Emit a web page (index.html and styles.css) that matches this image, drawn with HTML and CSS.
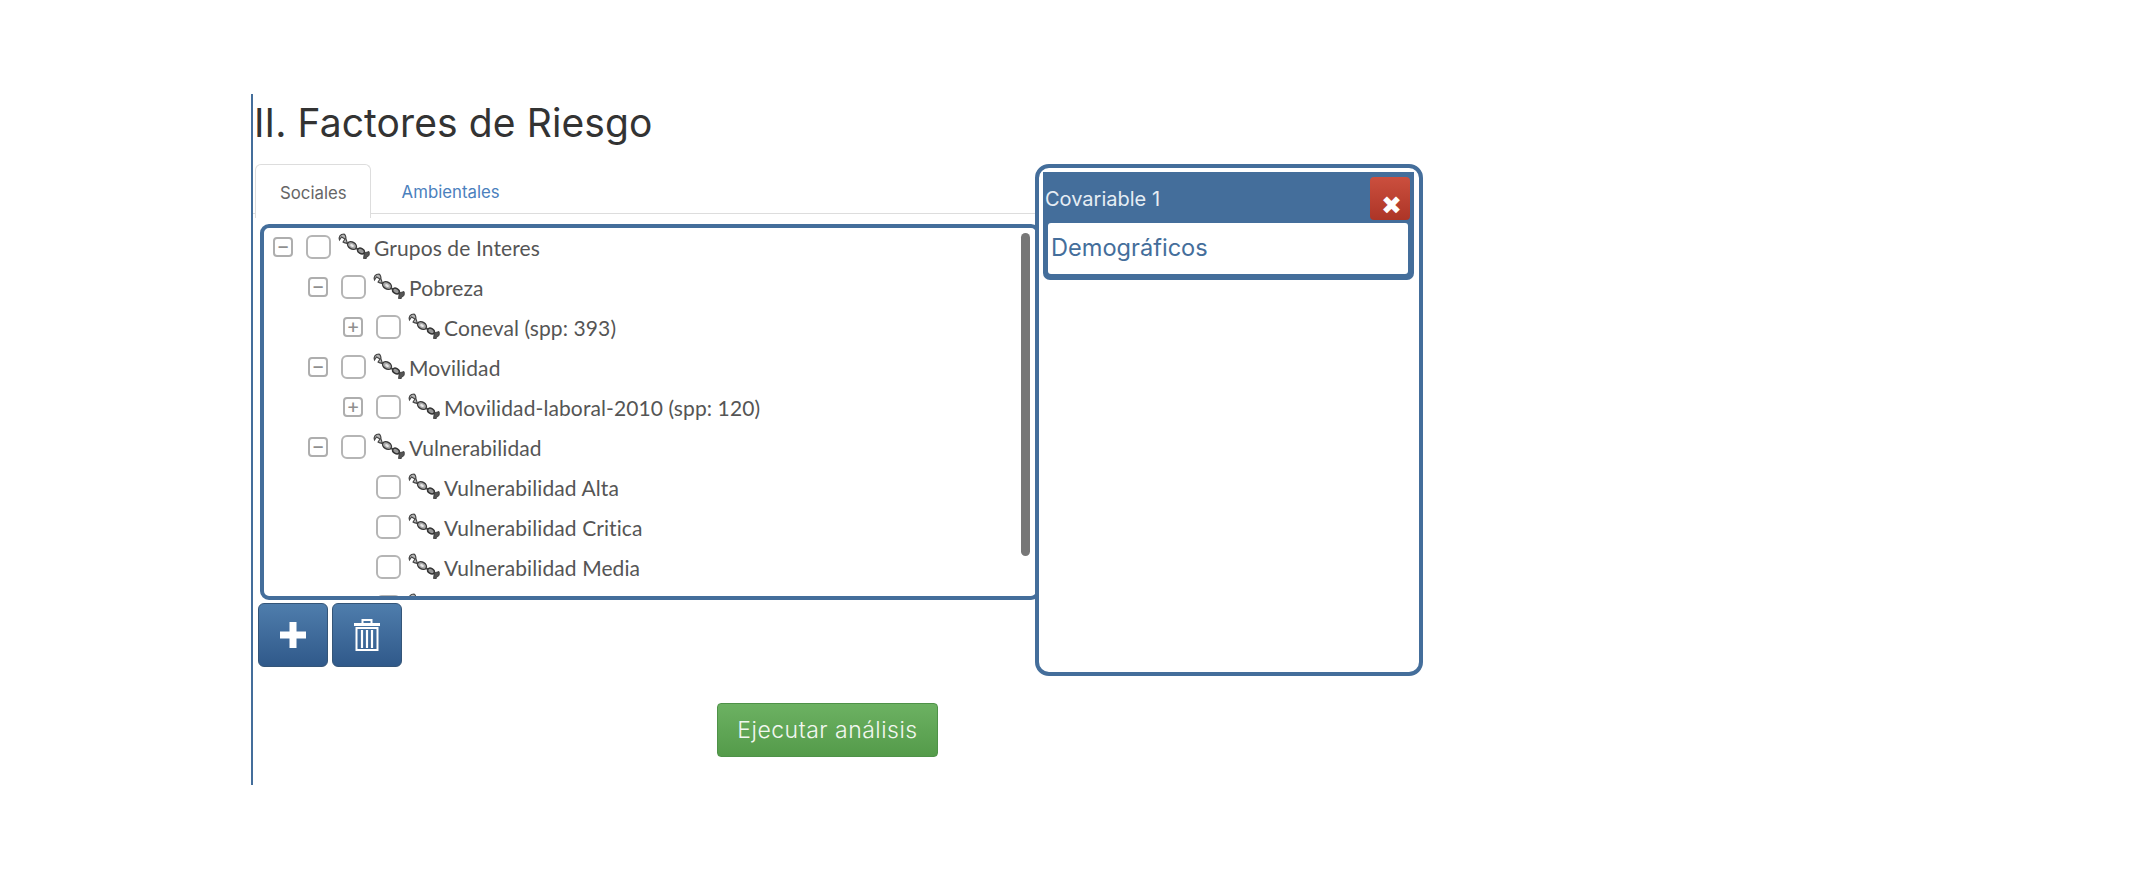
FILE: index.html
```html
<!DOCTYPE html>
<html lang="es">
<head>
  <meta charset="UTF-8" />
  <title>Factores de Riesgo</title>
  <link rel="stylesheet" href="styles.css">
</head>
<body>

<svg class="defs" width="0" height="0">
  <symbol id="dna" viewBox="0 0 33 26">
    <path d="M7 1 C3 1 1.500 4 2.500 7 L4.500 4 L8 6 L6 9 C7.500 10 9 10 10.500 10.500 L9 6 C9 4 9 2 7 1z" fill="#b5b5b5" stroke="#444" stroke-width="1.100"/>
    <ellipse cx="15" cy="12.500" rx="4.800" ry="3.400" transform="rotate(32 15 12.500)" fill="#a8a8a8" stroke="#3a3a3a" stroke-width="1.400"/>
    <ellipse cx="15" cy="12.500" rx="2" ry="1.300" transform="rotate(32 15 12.500)" fill="#e8e8e8"/>
    <path d="M19 15 L21 16.500" stroke="#444" stroke-width="2"/>
    <ellipse cx="24" cy="18" rx="3.600" ry="2.600" transform="rotate(32 24 18)" fill="#999" stroke="#333" stroke-width="1.400"/>
    <path d="M27 20 L32 18.500 C33 21 32 24 29.500 24 L29 26 L26.500 25.500 L27 22z" fill="#555" stroke="#333" stroke-width="0.800"/>
  </symbol>
</svg>

<div class="page">
  <h1>II. Factores de Riesgo</h1>

  <div class="workspace">
    <div class="left-col">
      <ul class="tabs">
        <li class="tab active">Sociales</li>
        <li class="tab">Ambientales</li>
      </ul>

      <div class="tree">
        <div class="row">
          <span class="toggle">&minus;</span><span class="check"></span>
          <svg class="dna"><use href="#dna"/></svg><span class="label">Grupos de Interes</span>
        </div>
        <div class="row lvl-1">
          <span class="toggle">&minus;</span><span class="check"></span>
          <svg class="dna"><use href="#dna"/></svg><span class="label">Pobreza</span>
        </div>
        <div class="row lvl-2">
          <span class="toggle">+</span><span class="check"></span>
          <svg class="dna"><use href="#dna"/></svg><span class="label">Coneval (spp: 393)</span>
        </div>
        <div class="row lvl-1">
          <span class="toggle">&minus;</span><span class="check"></span>
          <svg class="dna"><use href="#dna"/></svg><span class="label">Movilidad</span>
        </div>
        <div class="row lvl-2">
          <span class="toggle">+</span><span class="check"></span>
          <svg class="dna"><use href="#dna"/></svg><span class="label">Movilidad-laboral-2010 (spp: 120)</span>
        </div>
        <div class="row lvl-1">
          <span class="toggle">&minus;</span><span class="check"></span>
          <svg class="dna"><use href="#dna"/></svg><span class="label">Vulnerabilidad</span>
        </div>
        <div class="row lvl-2">
          <span class="toggle blank"></span><span class="check"></span>
          <svg class="dna"><use href="#dna"/></svg><span class="label">Vulnerabilidad Alta</span>
        </div>
        <div class="row lvl-2">
          <span class="toggle blank"></span><span class="check"></span>
          <svg class="dna"><use href="#dna"/></svg><span class="label">Vulnerabilidad Critica</span>
        </div>
        <div class="row lvl-2">
          <span class="toggle blank"></span><span class="check"></span>
          <svg class="dna"><use href="#dna"/></svg><span class="label">Vulnerabilidad Media</span>
        </div>
        <!-- next row is only peeking out above the bottom border -->
        <div class="row lvl-2">
          <span class="toggle blank"></span><span class="check"></span>
          <svg class="dna"><use href="#dna"/></svg>
        </div>
        <div class="scroll-thumb"></div>
      </div>

      <div class="tree-actions">
        <button class="icon-btn" type="button">
          <svg width="28" height="28" viewBox="0 0 28 28"><path d="M10.500 1h7v9.500h9.500v7h-9.500v9.500h-7v-9.500h-9.500v-7h9.500z" fill="#fff"/></svg>
        </button>
        <button class="icon-btn" type="button">
          <svg width="28" height="34" viewBox="0 0 28 34" fill="none" stroke="#fff">
            <path d="M1 6.500h26" stroke-width="3"/>
            <path d="M9.500 5v-3h9v3" stroke-width="2"/>
            <path d="M3.500 10h21v22h-21z" stroke-width="2"/>
            <path d="M9 12v18M14 12v18M19 12v18" stroke-width="2.200"/>
          </svg>
        </button>
      </div>
    </div>

    <aside class="panel">
      <div class="cov">
        <div class="cov-head">
          <span class="cov-title">Covariable 1</span>
          <button class="close-btn" type="button">&#10006;</button>
        </div>
        <div class="cov-body">Demográficos</div>
      </div>
    </aside>
  </div>

  <div class="run-row">
    <button class="run-btn" type="button">Ejecutar análisis</button>
  </div>
</div>

</body>
</html>
```

FILE: styles.css
```css
body {
  margin: 0;
  background: #fff;
  font-family: "Inter", sans-serif;
  color: #333;
}

.defs {
  display: block;
  height: 0;
}

.page {
  margin: 94px 0 0 251px;
  width: 1200px;
  height: 691px;
  border-left: 2px solid #446e9b;
}

h1 {
  margin: 0;
  height: 70px;
  padding-left: 1px;
  font-size: 39px;
  line-height: 58px;
  letter-spacing: 0.1px;
  font-weight: 400;
  color: #333;
  box-sizing: border-box;
}

.workspace {
  display: flex;
  align-items: flex-start;
}

.left-col {
  width: 787px;
  flex: none;
}

.tabs {
  display: flex;
  height: 50px;
  margin: 0 0 10px;
  padding: 0 0 0 2px;
  list-style: none;
  border-bottom: 1px solid #ddd;
  box-sizing: border-box;
}

.tab {
  height: 49px;
  padding: 0 29px 0 30px;
  font-size: 16.800px;
  line-height: 56px;
  color: #4a80bd;
}

.tab.active {
  height: 54px;
  padding: 0 23px 0 24px;
  margin-right: 1px;
  color: #666;
  background: #fff;
  border: 1px solid #ddd;
  border-bottom: none;
  border-radius: 6px 6px 0 0;
  box-sizing: border-box;
  position: relative;
}

.tree {
  height: 376px;
  margin-left: 7px;
  padding-left: 9px;
  border: 4px solid #446e9b;
  border-radius: 9px;
  box-sizing: border-box;
  overflow: hidden;
  background: #fff;
  position: relative;
}

.scroll-thumb {
  position: absolute;
  top: 5px;
  right: 6px;
  width: 9px;
  height: 323px;
  background: #777;
  border-radius: 5px;
}

.row {
  display: flex;
  align-items: center;
  height: 40px;
  position: relative;
  top: -1px;
}

.lvl-1 {
  padding-left: 35px;
}

.lvl-2 {
  padding-left: 70px;
}

.toggle {
  width: 20px;
  height: 20px;
  flex: none;
  margin-right: 13px;
  border: 2px solid #aeaeae;
  border-radius: 4px;
  box-sizing: border-box;
  font-size: 20px;
  line-height: 14px;
  text-align: center;
  color: #8f8f8f;
}

.toggle.blank {
  border: none;
}

.check {
  width: 25px;
  height: 24px;
  flex: none;
  margin-right: 6px;
  border: 2px solid #b5b5b5;
  border-radius: 6px;
  box-sizing: border-box;
  background: #fff;
}

.dna {
  width: 33px;
  height: 26px;
  flex: none;
  margin: -3px 4px 0 0;
}

.label {
  font-family: "Lato", sans-serif;
  font-size: 21px;
  letter-spacing: 0.1px;
  color: #555;
  white-space: nowrap;
}

.tree-actions {
  display: flex;
  gap: 4px;
  margin: 3px 0 0 5px;
}

.icon-btn {
  display: flex;
  align-items: center;
  justify-content: center;
  width: 70px;
  height: 64px;
  padding: 0;
  border: 1px solid #345578;
  border-radius: 6px;
  background: linear-gradient(#4f7dac, #30598a);
}

.panel {
  width: 388px;
  height: 512px;
  flex: none;
  margin-left: -5px;
  padding: 4px 5px 0 4px;
  border: 4px solid #446e9b;
  border-radius: 14px;
  box-sizing: border-box;
  background: #fff;
  position: relative;
}

.cov {
  padding: 5px 6px 6px 5px;
  background: #446e9b;
  border-radius: 0 0 7px 7px;
}

.cov-head {
  display: flex;
  align-items: flex-start;
  justify-content: space-between;
  height: 46px;
  margin-right: -2px;
}

.cov-title {
  margin: 8px 0 0 -3px;
  font-size: 20px;
  line-height: 28px;
  color: #e6edf4;
}

.close-btn {
  width: 40px;
  height: 43px;
  padding: 12px 0 0 3px;
  border: none;
  border-radius: 4px;
  background: linear-gradient(#cb4f3e, #ad3527);
  font-size: 25px;
  line-height: 26px;
  color: #fff;
}

.cov-body {
  height: 51px;
  padding-left: 3px;
  background: #fff;
  border-radius: 3px;
  font-size: 23.600px;
  line-height: 50px;
  color: #446e9b;
}

.run-row {
  display: flex;
  justify-content: center;
  width: 1149px;
  margin-top: 27px;
}

.run-btn {
  width: 221px;
  height: 54px;
  padding: 0;
  border: 1px solid #4e9248;
  border-radius: 4px;
  background: linear-gradient(#6cb162, #549b4a);
  font-family: "Inter", sans-serif;
  font-size: 23px;
  letter-spacing: 0.500px;
  font-weight: 300;
  color: #f2f7f0;
}
```
